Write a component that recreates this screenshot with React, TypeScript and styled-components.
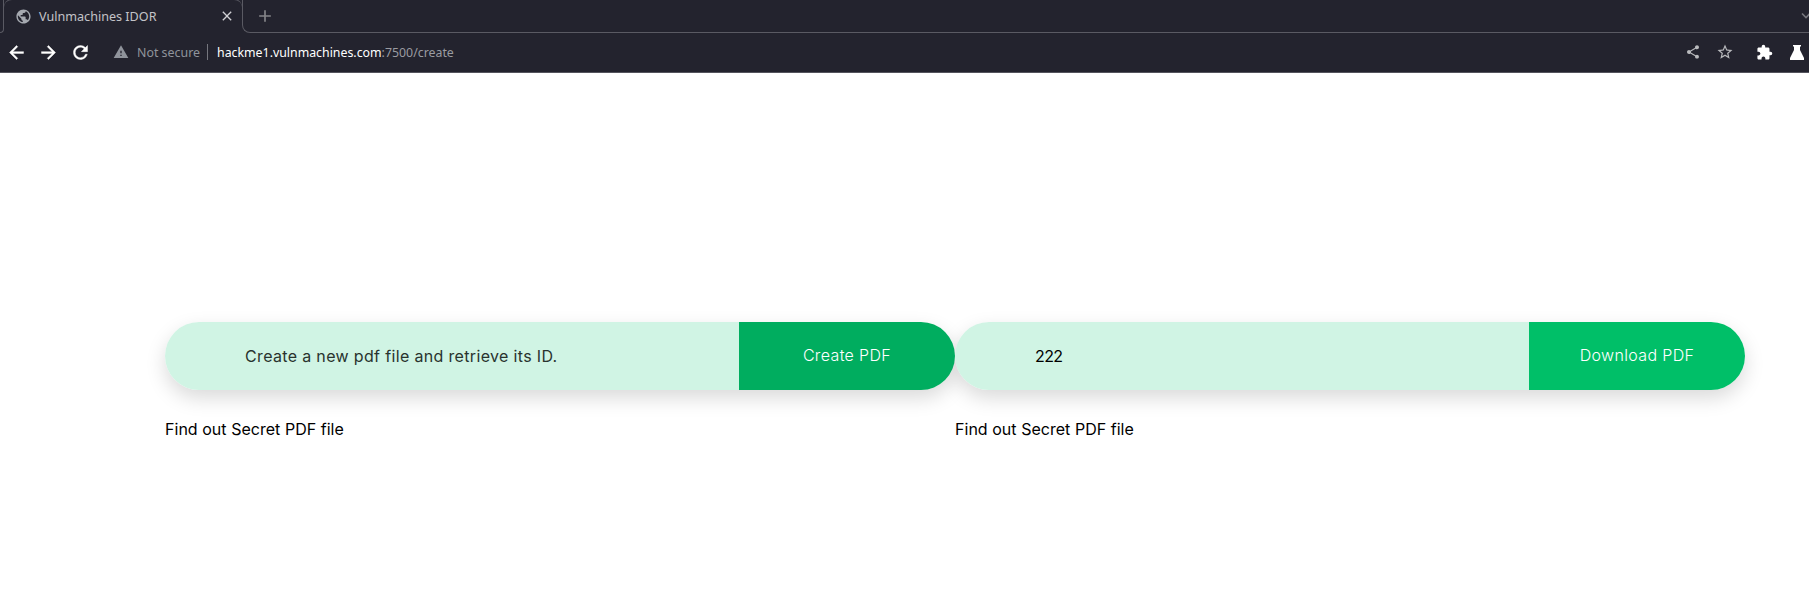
import React from 'react';
import styled, { createGlobalStyle } from 'styled-components';
import { MdArrowBack, MdArrowForward, MdRefresh, MdWarning, MdShare, MdStarBorder, MdExtension, MdPublic, MdClose, MdAdd } from 'react-icons/md';

const Global = createGlobalStyle`
  * { box-sizing: border-box; }
  body { margin: 0; background: #fff; overflow: hidden; }
  button, input { font: inherit; border: 0; margin: 0; outline: 0; }
  svg { display: block; flex: none; }
`;

const Chrome = styled.header`
  height: 73px;
  background: #23232e;
  border-bottom: 1px solid #54545d;
  font-family: 'Noto Sans', sans-serif;
  font-size: 12.6px;
  color: #9a9ba1;
  overflow: hidden;
`;

const TabStrip = styled.div`
  display: flex;
  height: 34px;
  margin-top: -1px;
`;

const Lead = styled.div`
  width: 4px;
  border-bottom: 1px solid #5a5a63;
  border-right: 1px solid #5a5a63;
  border-bottom-right-radius: 6px;
`;

const Tab = styled.div`
  width: 238px;
  display: flex;
  align-items: center;
  padding: 0 7px 1px 11px;
  border-top: 1px solid #5a5a63;
  border-radius: 8px 8px 0 0;
`;

const TabTitle = styled.span`
  flex: 1;
  margin-left: 7px;
  color: #c3c3c8;
  white-space: nowrap;
`;

const Rest = styled.div`
  flex: 1;
  display: flex;
  align-items: center;
  justify-content: space-between;
  padding-left: 12px;
  border-left: 1px solid #5a5a63;
  border-bottom: 1px solid #5a5a63;
  border-bottom-left-radius: 8px;
  overflow: hidden;
`;

const Chevron = styled.svg`
  margin-right: -4px;
`;

const Toolbar = styled.div`
  display: flex;
  align-items: center;
  height: 38px;
  padding-left: 6px;
`;

const Nav = styled.nav`
  display: flex;
  gap: 11px;
  color: #fff;
  path:not([fill='none']) { stroke: #fff; stroke-width: 0.5; }
`;

const Security = styled.div`
  display: flex;
  align-items: center;
  gap: 8px;
  width: 94px;
  margin-left: 22px;
  white-space: nowrap;
  color: #8f939b;
  font-size: 12.4px;
`;

const Address = styled.div`
  display: flex;
  flex: 1;
  align-items: center;
  height: 16px;
  padding-left: 9px;
  border-left: 1px solid #75767e;
  white-space: nowrap;
  font-size: 12.35px;
`;

const Host = styled.span`
  color: #fff;
`;

const Actions = styled.div`
  display: flex;
  align-items: center;
  padding-right: 5px;
  color: #fff;
`;

const Action = styled.span<{ $gap?: number; $muted?: boolean }>`
  margin-left: ${(p) => p.$gap ?? 0}px;
  color: ${(p) => (p.$muted ? '#b9babd' : '#fff')};
`;

const Page = styled.main`
  display: flex;
  height: 526px;
  padding: 249px 64px 0 165px;
  font-family: Inter, sans-serif;
  font-size: 16px;
  color: #000;
`;

const Panel = styled.section`
  width: 790px;
`;

const Form = styled.form`
  display: flex;
  height: 68px;
  border-radius: 34px;
  box-shadow: 0 8px 20px rgba(0, 0, 0, 0.15);
`;

const Field = styled.input<{ $spacing: number }>`
  width: 574px;
  padding: 0 30px 1px 80px;
  border-radius: 34px 0 0 34px;
  background: #d0f4e4;
  color: #000;
  letter-spacing: ${(p) => p.$spacing}px;
  &::placeholder { color: #29332e; opacity: 1; }
`;

const Submit = styled.button<{ $active?: boolean }>`
  position: relative;
  width: 216px;
  padding: 0 0 2px;
  border-radius: 0 34px 34px 0;
  background: ${(p) => (p.$active ? '#00ad5f' : '#00bf68')};
  color: #fff;
  font-weight: 300;
  letter-spacing: 0.35px;
`;

const Hint = styled.p`
  margin: 26px 0 0;
  line-height: 27px;
  letter-spacing: 0.03px;
`;

export default function App() {
  return (
    <>
      <Global />
      <Chrome>
        <TabStrip>
          <Lead />
          <Tab>
            <MdPublic size={17} color="#a5a9b0" />
            <TabTitle>Vulnmachines IDOR</TabTitle>
            <MdClose size={16} color="#d0d0d4" />
          </Tab>
          <Rest>
            <MdAdd size={20} color="#858589" />
            <Chevron width="12" height="10" viewBox="0 0 12 10" fill="none" stroke="#77777e" strokeWidth="1.6">
              <path d="M1 2.5 5 6.5 9 2.5" />
            </Chevron>
          </Rest>
        </TabStrip>
        <Toolbar>
          <Nav>
            <MdArrowBack size={21} />
            <MdArrowForward size={21} />
            <MdRefresh size={21} />
          </Nav>
          <Security>
            <MdWarning size={16} />
            Not secure
          </Security>
          <Address>
            <Host>hackme1.vulnmachines.com</Host>:7500/create
          </Address>
          <Actions>
            <Action $muted><MdShare size={16} /></Action>
            <Action $gap={15} $muted><MdStarBorder size={18} /></Action>
            <Action $gap={22}><MdExtension size={17} /></Action>
            <Action $gap={17}>
              <svg width="14" height="15" viewBox="0 0 14 15" fill="currentColor">
                <path d="M3 0h8v1.6H10V5l4 8v2H0v-2l4-8V1.6H3z" />
              </svg>
            </Action>
          </Actions>
        </Toolbar>
      </Chrome>
      <Page>
        <Panel>
          <Form>
            <Field $spacing={0.34} placeholder="Create a new pdf file and retrieve its ID." />
            <Submit type="button" $active>Create PDF</Submit>
          </Form>
          <Hint>Find out Secret PDF file</Hint>
        </Panel>
        <Panel>
          <Form>
            <Field $spacing={-0.6} defaultValue="222" />
            <Submit type="button">Download PDF</Submit>
          </Form>
          <Hint>Find out Secret PDF file</Hint>
        </Panel>
      </Page>
    </>
  );
}
